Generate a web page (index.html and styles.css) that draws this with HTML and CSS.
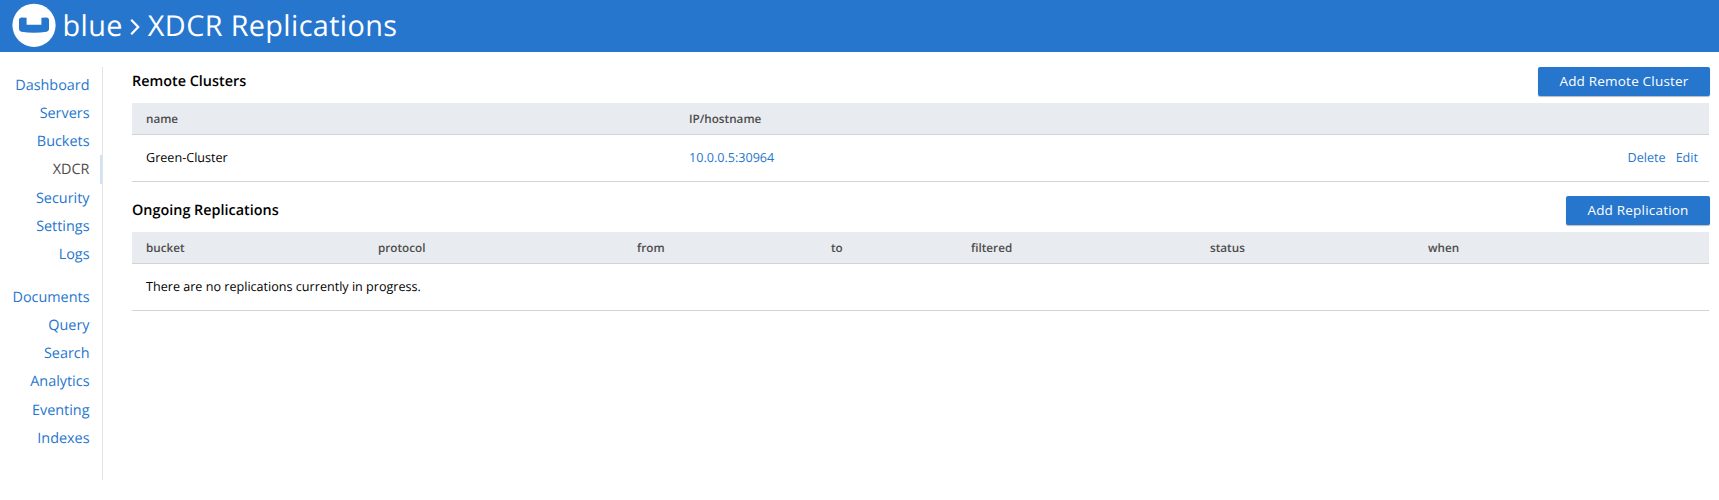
FILE: index.html
```html
<!DOCTYPE html>
<html lang="en">
<head>
<meta charset="utf-8">
<title>XDCR Replications</title>
<link rel="stylesheet" href="styles.css">
</head>
<body>
<header class="header">
  <svg class="logo" width="44" height="44" viewBox="0 0 44 44" aria-hidden="true">
    <circle cx="22" cy="22.300" r="21.6" fill="#fff"/>
    <path d="M14.6 14.7v7h14.8v-7l5-.3q2.600 0 2.600 2.600v9q0 2.300-2.300 2.700Q22 31 9.300 28.700 7 28.300 7 26v-9q0-2.600 2.600-2.600z" fill="#2676ce"/>
  </svg>
  <h1 class="title"><span class="cluster">blue</span><svg class="chevron" width="10" height="18" viewBox="0 0 10 18" aria-hidden="true"><path d="M1.200 1.800 8.200 9l-7 7.200" fill="none" stroke="#fff" stroke-width="2.300"/></svg><span class="page">XDCR Replications</span></h1>
</header>
<div class="layout">
  <nav class="nav">
    <a>Dashboard</a>
    <a>Servers</a>
    <a>Buckets</a>
    <a class="active">XDCR</a>
    <a>Security</a>
    <a>Settings</a>
    <a>Logs</a>
    <a class="group">Documents</a>
    <a>Query</a>
    <a>Search</a>
    <a>Analytics</a>
    <a>Eventing</a>
    <a>Indexes</a>
  </nav>
  <main class="main">
    <section class="section">
      <div class="bar"><h2><span>Remote Clusters</span></h2><button class="btn btn-cluster"><span>Add Remote Cluster</span></button></div>
      <div class="row head clusters"><span>name</span><span>IP/hostname</span></div>
      <div class="row clusters"><span>Green-Cluster</span><a>10.0.0.5:30964</a><div class="actions"><a>Delete</a><a>Edit</a></div></div>
    </section>
    <section class="section">
      <div class="bar"><h2><span>Ongoing Replications</span></h2><button class="btn btn-replication"><span>Add Replication</span></button></div>
      <div class="row head replications"><span>bucket</span><span>protocol</span><span>from</span><span>to</span><span>filtered</span><span>status</span><span>when</span></div>
      <div class="row"><span>There are no replications currently in progress.</span></div>
    </section>
  </main>
</div>
</body>
</html>
```
FILE: styles.css
```css
* { box-sizing: border-box; }
body { margin: 0; background: #fff; color: #000; font: 12.6px/20px "Open Sans", sans-serif; text-rendering: geometricPrecision; }
a { color: #2676ce; }
.header { display: flex; height: 52px; padding: 3px 0 0 12px; background: #2676ce; color: #fff; }
.logo { flex: none; }
.title { display: flex; margin: 0 0 0 6.6px; font-size: 28.8px; line-height: 46px; font-weight: 400; letter-spacing: 0.38px; }
.chevron { margin: 15px 8px 0 7px; }
.layout { display: flex; padding-top: 15px; }
.nav { display: flex; flex-direction: column; width: 103px; height: 413px; padding-top: 4px; border-right: 1px solid #e3e3e3; }
.nav a { flex: none; height: 28.15px; padding-right: 10.5px; border-right: 2px solid transparent; text-align: right; font-size: 14.4px; line-height: 30.15px; }
.nav .active { color: #4d4d4d; border-color: #cfe1f5; }
.nav .group { margin-top: 15px; }
.main { flex: 1; padding: 0 9px 0 29px; }
.section { height: 129px; padding-right: 1px; }
.bar { display: flex; justify-content: space-between; height: 36px; margin-right: -1px; }
h2 { margin: 0; font-size: 14.4px; line-height: 30px; font-weight: 600; }
.btn { height: 29px; padding: 0; border: 0; border-radius: 2px; background: #2676ce; box-shadow: 0 1px 1px #bbb; color: #fff; font: 13.5px/28px "Open Sans", sans-serif; letter-spacing: 0.2px; }
.btn span { display: block; height: 29px; }
.btn-cluster { width: 172px; }
.btn-replication { width: 144px; }
.row { display: flex; align-items: center; height: 47px; padding: 0 11px 1px 14px; border-bottom: 1px solid #d3d3d3; }
.head { height: 32px; padding-bottom: 0; background: #e8ebf0; color: #4d4d4d; font-size: 11.7px; font-weight: 600; }
.clusters { display: grid; grid-template-columns: 543px 1fr auto; }
.replications { display: grid; grid-template-columns: 232px 259px 194px 140px 239px 218px 1fr; }
.actions { display: flex; gap: 10px; }
```
